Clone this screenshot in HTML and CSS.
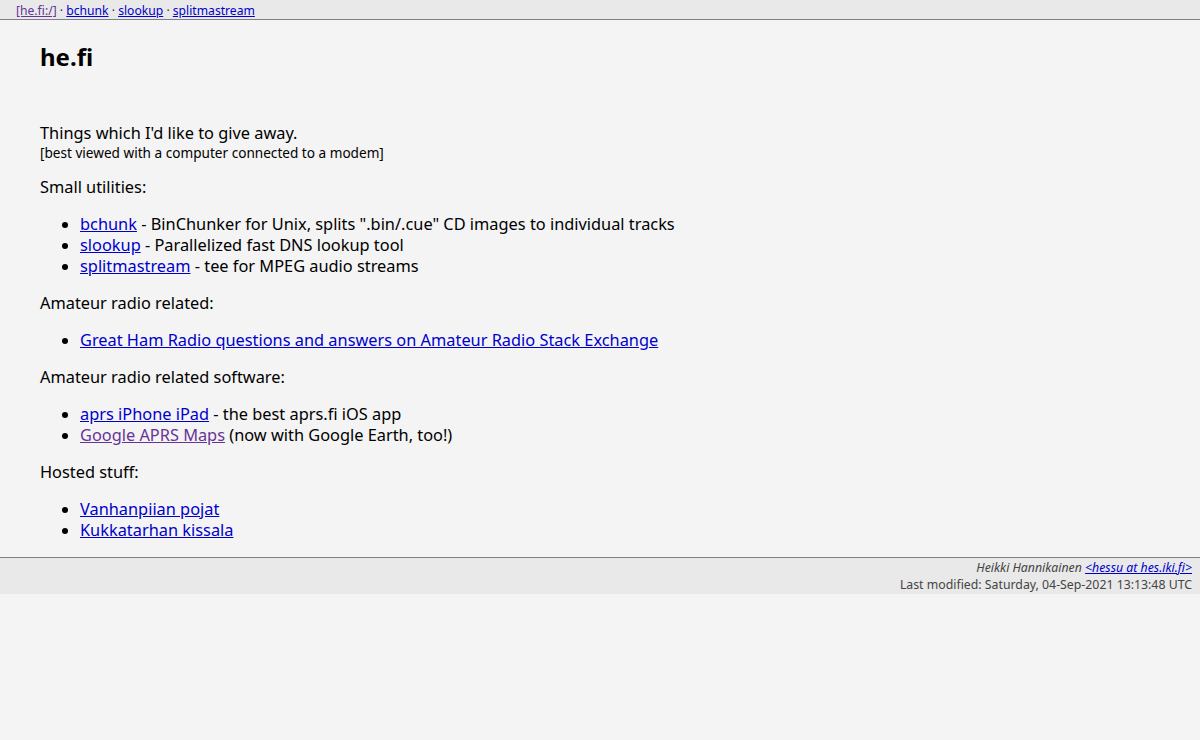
FILE: index.html
```html
<!DOCTYPE html>
<html>
<head>
<meta charset="utf-8">
<title>he.fi</title>
<link rel="stylesheet" href="styles.css">
</head>
<body>
<div class="nav"><a class="visited" href="#">[he.fi:/]</a> · <a href="#">bchunk</a> · <a href="#">slookup</a> · <a href="#">splitmastream</a></div>
<div class="main">
<h1>he.fi</h1>
<p class="intro">Things which I'd like to give away.<span class="small">[best viewed with a computer connected to a modem]</span></p>
<p>Small utilities:</p>
<ul>
<li><a href="#">bchunk</a> - BinChunker for Unix, splits ".bin/.cue" CD images to individual tracks</li>
<li><a href="#">slookup</a> - Parallelized fast DNS lookup tool</li>
<li><a href="#">splitmastream</a> - tee for MPEG audio streams</li>
</ul>
<p>Amateur radio related:</p>
<ul>
<li><a href="#">Great Ham Radio questions and answers on Amateur Radio Stack Exchange</a></li>
</ul>
<p>Amateur radio related software:</p>
<ul>
<li><a href="#">aprs iPhone iPad</a> - the best aprs.fi iOS app</li>
<li><a class="visited" href="#">Google APRS Maps</a> (now with Google Earth, too!)</li>
</ul>
<p>Hosted stuff:</p>
<ul>
<li><a href="#">Vanhanpiian pojat</a></li>
<li><a href="#">Kukkatarhan kissala</a></li>
</ul>
</div>
<div class="footer">
<div class="author"><i>Heikki Hannikainen <a href="#">&lt;hessu at hes.iki.fi&gt;</a></i></div>
<div>Last modified: Saturday, 04-Sep-2021 13:13:48 UTC</div>
</div>
</body>
</html>
```
FILE: styles.css
```css
html, body {
  margin: 0;
  padding: 0;
  background: #f4f4f4;
  color: #000;
  font-family: "Noto Sans", "Open Sans", sans-serif;
}
a { color: #0000cc; }
a.visited { color: #663399; }
.nav {
  background: #e9e9e9;
  border-bottom: 1px solid #808080;
  font-size: 12.15px;
  line-height: 17px;
  height: 17px;
  padding: 2px 16px 0 16px;
  color: #333;
}
.main {
  padding: 23px 40px 0 40px;
  font-size: 16.35px;
  line-height: 21px;
}
h1 {
  font-size: 24px;
  line-height: 28px;
  margin: 0 0 52px 0;
}
p { margin: 16px 0; }
.intro { margin-top: 0; }
.small { display: block; font-size: 13.6px; line-height: 17px; }
ul { margin: 16px 0; padding-left: 40px; }
.footer {
  background: #e9e9e9;
  border-top: 1px solid #808080;
  text-align: right;
  padding: 1px 8px 1px 0;
  font-size: 12.3px;
  line-height: 17px;
  color: #444;
}
.footer a { color: #0000cc; }
```
